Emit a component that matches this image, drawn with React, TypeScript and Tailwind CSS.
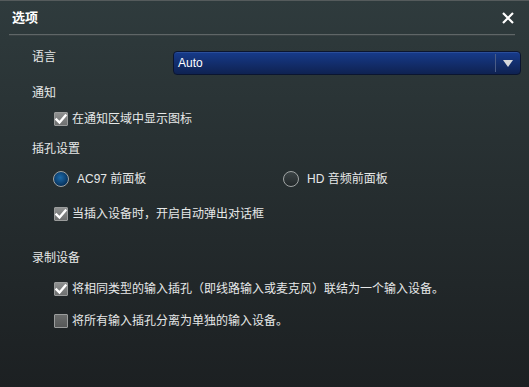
import React, { useState } from 'react';

const font = { fontFamily: '"Liberation Sans", "Noto Sans CJK SC", sans-serif' };

const CheckBox: React.FC<{ checked: boolean; label: string; onToggle: () => void }> = ({ checked, label, onToggle }) => (
  <button onClick={onToggle} className="flex items-center h-4 text-[12px] leading-4 text-[#e6e8e8]">
    <span
      className={`w-[14px] h-[14px] flex items-center justify-center border border-[#9a9c9c] rounded-[1px] ${
        checked ? 'bg-gradient-to-b from-[#8e9090] to-[#6e7070]' : 'bg-gradient-to-b from-[#6a6c6c] to-[#565858]'
      }`}
    >
      {checked && (
        <svg width="12" height="11" viewBox="0 0 12 11">
          <path d="M1.5 5.5 L4.5 8.5 L10.5 1.5" fill="none" stroke="#fff" strokeWidth="2.4" strokeLinecap="square" />
        </svg>
      )}
    </span>
    <span className="ml-[4px]">{label}</span>
  </button>
);

const Radio: React.FC<{ checked: boolean; label: string; onSelect: () => void }> = ({ checked, label, onSelect }) => (
  <button onClick={onSelect} className="flex items-center h-4 text-[12px] leading-4 text-[#e6e8e8]">
    <span
      className={`w-4 h-4 rounded-full border-[1.5px] border-[#a0a4a4] ${
        checked ? 'bg-[radial-gradient(circle_at_45%_40%,#1c6aa8,#08335e_70%)]' : 'bg-gradient-to-b from-[#3c4446] to-[#22282a]'
      }`}
    />
    <span className="ml-[8px]">{label}</span>
  </button>
);

export default function App() {
  const [notify, setNotify] = useState(true);
  const [jack, setJack] = useState<'ac97' | 'hd'>('ac97');
  const [autoPopup, setAutoPopup] = useState(true);
  const [rec, setRec] = useState<'merge' | 'split'>('merge');

  return (
    <div
      style={font}
      className="w-[529px] h-[387px] overflow-hidden bg-gradient-to-b from-[#2f3b3d] to-[#1c2022] border-t border-[#555b5c] select-none"
    >
      <div className="h-[33px] flex items-center justify-between pl-3 pr-[15px]">
        <h1 className="text-[13px] font-bold text-white">选项</h1>
        <svg width="12" height="12" viewBox="0 0 12 12">
          <path d="M1 1 L11 11 M11 1 L1 11" stroke="#fff" strokeWidth="2.2" />
        </svg>
      </div>
      <div className="ml-[9px] w-[506px] h-[2px] bg-[#5f6667] border-b border-[#394143]" />

      <div className="pl-8 text-[12px] leading-4 text-[#e6e8e8]">
        <div className="flex items-start mt-[13px]">
          <span className="w-[141px]">语言</span>
          <div className="mt-[2px] w-[348px] h-6 flex items-center rounded-[4px] border border-[#0b1530] bg-gradient-to-b from-[#163b8c] to-[#0f2251] shadow-[inset_0_1px_0_#2a4e9a]">
            <span className="flex-1 pl-[4px] text-white text-[12px]">Auto</span>
            <span className="w-px h-[18px] bg-[#4a5c86]" />
            <svg className="mx-[7px]" width="10" height="7" viewBox="0 0 10 7">
              <path d="M0 0 H10 L5 7 Z" fill="#d6d8dc" />
            </svg>
          </div>
        </div>

        <div className="mt-[10px]">通知</div>
        <div className="mt-[10px] ml-[22px]">
          <CheckBox checked={notify} label="在通知区域中显示图标" onToggle={() => setNotify(!notify)} />
        </div>

        <div className="mt-[14px]">插孔设置</div>
        <div className="mt-[14px] ml-[21px] flex">
          <div className="w-[230px]">
            <Radio checked={jack === 'ac97'} label="AC97 前面板" onSelect={() => setJack('ac97')} />
          </div>
          <Radio checked={jack === 'hd'} label="HD 音频前面板" onSelect={() => setJack('hd')} />
        </div>
        <div className="mt-[19px] ml-[22px]">
          <CheckBox checked={autoPopup} label="当插入设备时，开启自动弹出对话框" onToggle={() => setAutoPopup(!autoPopup)} />
        </div>

        <div className="mt-[28px]">录制设备</div>
        <div className="mt-[15px] ml-[22px]">
          <CheckBox
            checked={rec === 'merge'}
            label="将相同类型的输入插孔（即线路输入或麦克风）联结为一个输入设备。"
            onToggle={() => setRec('merge')}
          />
        </div>
        <div className="mt-[16px] ml-[22px]">
          <CheckBox checked={rec === 'split'} label="将所有输入插孔分离为单独的输入设备。" onToggle={() => setRec('split')} />
        </div>
      </div>
    </div>
  );
}
